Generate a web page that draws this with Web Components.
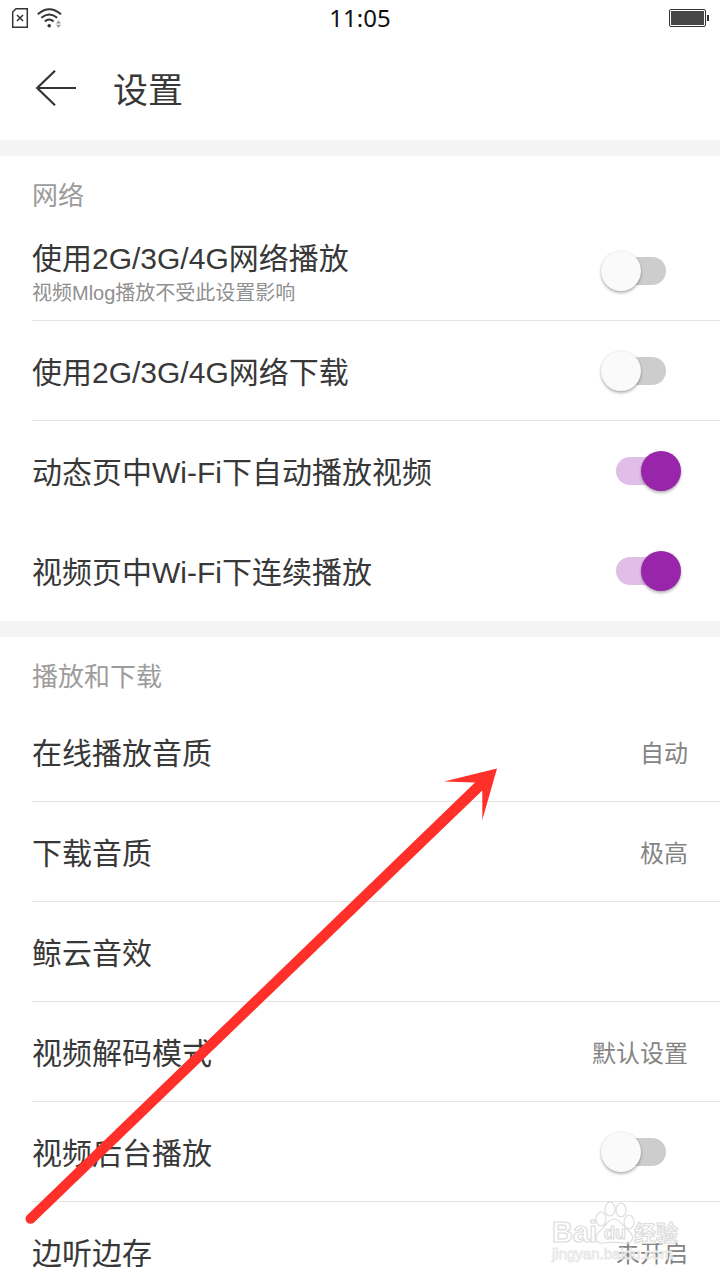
<!DOCTYPE html>
<html lang="zh-CN">
<head>
<meta charset="utf-8">
<meta name="viewport" content="width=device-width, initial-scale=1">
<title>设置</title>
<style>
  html, body { margin: 0; height: 100%; }
  body {
    font-family: "Liberation Sans", "Noto Sans CJK SC", sans-serif;
    color: #383838;
    background: #fff;
  }
</style>
</head>
<body>
<settings-screen>
  <status-bar slot="status" time="11:05"></status-bar>
  <title-bar slot="title">设置</title-bar>

  <settings-group heading="网络">
    <switch-row>使用2G/3G/4G网络播放<span slot="note">视频Mlog播放不受此设置影响</span></switch-row>
    <switch-row>使用2G/3G/4G网络下载</switch-row>
    <switch-row plain on>动态页中Wi-Fi下自动播放视频</switch-row>
    <switch-row plain on>视频页中Wi-Fi下连续播放</switch-row>
  </settings-group>

  <settings-group heading="播放和下载">
    <value-row>在线播放音质<span slot="value">自动</span></value-row>
    <value-row>下载音质<span slot="value">极高</span></value-row>
    <value-row>鲸云音效</value-row>
    <value-row>视频解码模式<span slot="value">默认设置</span></value-row>
    <switch-row>视频后台播放</switch-row>
    <value-row>边听边存<span slot="value">未开启</span></value-row>
  </settings-group>

  <pointer-arrow slot="overlay"></pointer-arrow>
  <site-watermark slot="overlay"></site-watermark>
</settings-screen>

<script>
const define = (name, html, setup) => {
  const template = document.createElement('template');
  template.innerHTML = html;
  customElements.define(name, class extends HTMLElement {
    constructor() {
      super();
      this.attachShadow({ mode: 'open' }).append(template.content.cloneNode(true));
    }
    connectedCallback() {
      if (setup) setup(this, this.shadowRoot);
    }
  });
};

define('settings-screen', `
  <style>
    :host { display: flex; flex-direction: column; position: relative; height: 100vh; overflow: hidden; }
    main { flex: 1; min-height: 0; overflow-y: auto; scrollbar-width: none; }
  </style>
  <slot name="status"></slot>
  <slot name="title"></slot>
  <main><slot></slot></main>
  <slot name="overlay"></slot>
`);

define('status-bar', `
  <style>
    :host {
      display: grid; grid-template-columns: 1fr auto 1fr; align-items: center;
      flex: none; height: 36px; padding: 0 11px;
      font: 24px/36px "Noto Sans", sans-serif; color: #111;
    }
    .signals { display: flex; gap: 8px; }
    .battery { justify-self: end; }
    svg { display: block; }
  </style>
  <div class="signals">
    <svg width="18" height="22" viewBox="0 0 18 22" fill="none" stroke="#333" aria-label="无SIM卡">
      <path d="M5 1.7H16.3V20.3H1.7V5Z" stroke-width="1.5"/>
      <path d="M6 8L12 14M12 8L6 14" stroke-width="1.5"/>
    </svg>
    <svg width="26" height="22" viewBox="0 0 26 22" fill="none" stroke="#333" stroke-width="2" aria-label="Wi-Fi">
      <path d="M.8 7.2Q12.2-2.8 24 7.2M4.3 10.8Q12.2 4.2 20.2 10.8M7.8 14.4Q12.2 10.6 16.6 14.4"/>
      <circle cx="12.2" cy="18.8" r="1.8" fill="#333" stroke="none"/>
      <path d="M19 16.6L21.5 13.2L24 16.6ZM19 17.8H24L21.5 21Z" fill="#999" stroke="none"/>
    </svg>
  </div>
  <time></time>
  <svg class="battery" width="41" height="20" viewBox="0 0 41 20" aria-label="电池">
    <rect x="1.5" y="1.5" width="36" height="17" rx="1.5" fill="none" stroke="#333"/>
    <rect x="3" y="3" width="33" height="14" fill="#474747"/>
    <rect x="39" y="7" width="2" height="6" fill="#333"/>
  </svg>
`, (host, root) => {
  root.querySelector('time').textContent = host.getAttribute('time');
});

define('title-bar', `
  <style>
    :host { display: flex; align-items: center; gap: 36px; flex: none; height: 104px; padding: 0 35px; }
    button { border: 0; padding: 0; background: none; }
    svg { display: block; }
    h1 { margin: 0; padding-top: 6px; font-size: 35px; line-height: 48px; font-weight: 400; }
  </style>
  <button type="button" aria-label="返回">
    <svg width="42" height="38" viewBox="0 0 42 38" fill="none" stroke="#333" stroke-width="2.2">
      <path d="M20 1.8L2.2 19L20 36.2M2 19H41"/>
    </svg>
  </button>
  <h1><slot></slot></h1>
`);

define('settings-group', `
  <style>
    :host { display: block; border-top: 16px solid #f4f4f4; }
    h2 { margin: 0; padding: 21px 32px 6px; font-size: 26px; line-height: 38px; font-weight: 400; color: #9c9c9c; }
  </style>
  <section>
    <h2></h2>
    <slot></slot>
  </section>
`, (host, root) => {
  root.querySelector('h2').textContent = host.getAttribute('heading');
});

const rowStyle = `
    :host { display: block; margin-left: 32px; border-bottom: 1px solid #e4e4e4; }
    :host([plain]) { border-color: transparent; }
    .row { display: flex; align-items: center; justify-content: space-between; height: 99px; font-size: 30px; line-height: 40px; }
    .text { padding-top: 4px; }
`;

define('switch-row', `
  <style>
    ${rowStyle}
    .row { padding-right: 39px; }
    .note { display: block; font-size: 20px; line-height: 28px; color: #909090; }
    input {
      appearance: none; display: grid; align-items: center; flex: none;
      width: 80px; height: 40px; margin: 0;
    }
    input::before, input::after { content: ""; grid-area: 1 / 1; }
    input::before { height: 28px; margin: 0 15px; border-radius: 14px; background: #cdcdcd; }
    input::after {
      width: 40px; height: 40px; border-radius: 50%; background: #fafafa;
      box-shadow: 0 2px 3px rgba(0, 0, 0, .28), 0 0 2px rgba(0, 0, 0, .12);
    }
    input:checked::before { background: #e1bee7; }
    input:checked::after { justify-self: end; background: #9825aa; }
  </style>
  <div class="row">
    <label class="text" for="toggle"><slot></slot><span class="note"><slot name="note"></slot></span></label>
    <input id="toggle" type="checkbox" role="switch">
  </div>
`, (host, root) => {
  root.querySelector('input').checked = host.hasAttribute('on');
  if (!host.querySelector('[slot=note]')) root.querySelector('.note')?.remove();
});

define('value-row', `
  <style>
    ${rowStyle}
    button.row { width: 100%; border: 0; padding: 0 32px 0 0; background: none; font-family: inherit; color: inherit; text-align: left; }
    .value { font-size: 24px; color: #848484; }
  </style>
  <button type="button" class="row">
    <span class="text"><slot></slot></span>
    <span class="text value"><slot name="value"></slot></span>
  </button>
`);

define('pointer-arrow', `
  <style>
    :host { display: block; position: absolute; inset: 0; pointer-events: none; }
    svg { display: block; width: 100%; height: 100%; }
  </style>
  <svg viewBox="0 0 720 1280" preserveAspectRatio="xMinYMin meet" fill="#ff3029" aria-hidden="true">
    <path d="M497 768.5L482.3 820V790.5L34 1222.4A5 5 0 0 1 27 1215.2L475 782.5L444 781.5Z"/>
  </svg>
`);

define('site-watermark', `
  <style>
    :host { display: block; position: absolute; right: 36px; bottom: 11px; pointer-events: none; }
    svg { display: block; }
    text { font-family: "Liberation Sans", "Noto Sans CJK SC", sans-serif; }
  </style>
  <svg width="134" height="68" viewBox="0 0 134 68" fill="#fff" fill-opacity=".5" stroke="#ddd" stroke-width="1.2">
    <text x="2" y="41" font-size="29" font-weight="700">Bai</text>
    <path d="M64 18C58 18 56 25 50 30C43 36 46 43 54 42C60 41 68 41 74 42C83 43 85 36 79 30C72 25 70 18 64 18Z"/>
    <ellipse cx="51" cy="18" rx="5" ry="7"/>
    <ellipse cx="60" cy="8" rx="5" ry="7"/>
    <ellipse cx="71" cy="9" rx="5" ry="7"/>
    <ellipse cx="79" cy="21" rx="5" ry="7"/>
    <text x="54" y="38" font-size="18" font-weight="700">du</text>
    <text x="84" y="40" font-size="22" font-weight="700">经验</text>
    <text x="2" y="58" font-size="15" stroke="#e8e8e8" stroke-width="1">jingyan.baidu.com</text>
  </svg>
`);
</script>
</body>
</html>
